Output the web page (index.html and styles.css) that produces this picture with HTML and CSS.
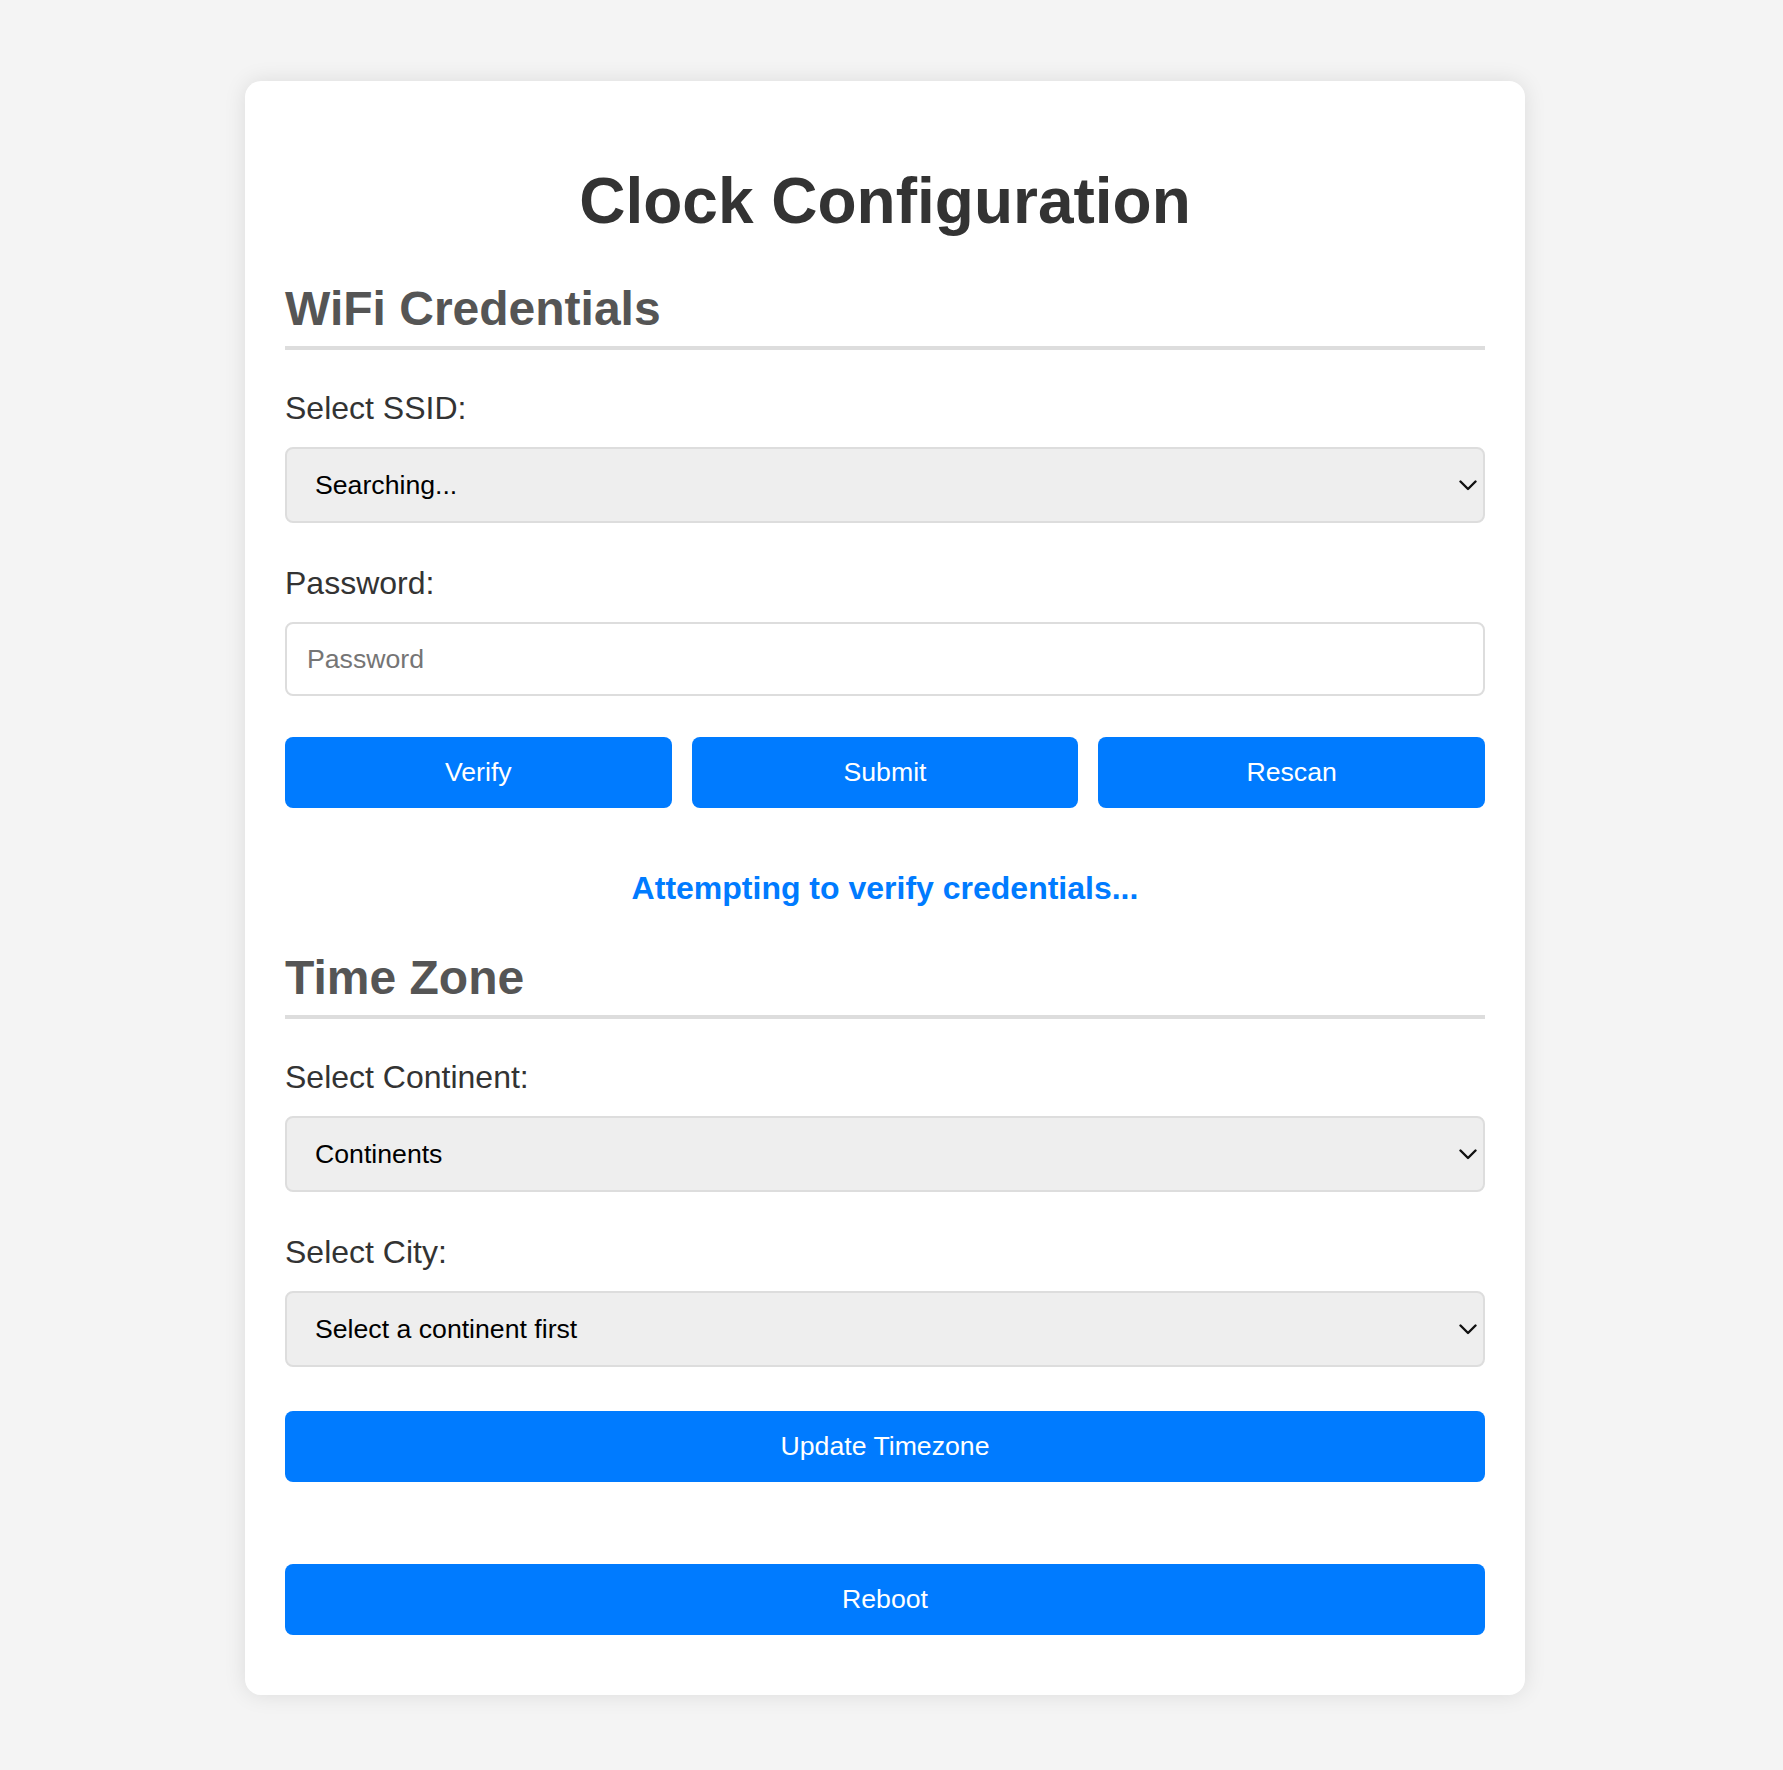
FILE: index.html
```html
<!DOCTYPE html>
<html lang="en">
<head>
<meta charset="utf-8">
<title>Clock Configuration</title>
<link rel="stylesheet" href="styles.css">
</head>
<body>
<main class="card">
  <h1 class="title">Clock Configuration</h1>

  <section class="section">
    <h2 class="section-title">WiFi Credentials</h2>
    <label class="field-label" for="ssid">Select SSID:</label>
    <div class="select-wrap">
      <select id="ssid" class="field-select">
        <option>Searching...</option>
      </select>
      <svg class="chevron" viewBox="0 0 18 11" width="18" height="11" aria-hidden="true"><path d="M1.5 1.5 L9 9 L16.5 1.5" fill="none" stroke="#111" stroke-width="2.4" stroke-linecap="round" stroke-linejoin="round"/></svg>
    </div>
    <label class="field-label" for="pw">Password:</label>
    <input id="pw" class="field-input" type="password" placeholder="Password">
    <div class="button-row">
      <button class="btn">Verify</button>
      <button class="btn">Submit</button>
      <button class="btn">Rescan</button>
    </div>
    <p class="status">Attempting to verify credentials...</p>
  </section>

  <section class="section tz">
    <h2 class="section-title">Time Zone</h2>
    <label class="field-label" for="continent">Select Continent:</label>
    <div class="select-wrap">
      <select id="continent" class="field-select">
        <option>Continents</option>
      </select>
      <svg class="chevron" viewBox="0 0 18 11" width="18" height="11" aria-hidden="true"><path d="M1.5 1.5 L9 9 L16.5 1.5" fill="none" stroke="#111" stroke-width="2.4" stroke-linecap="round" stroke-linejoin="round"/></svg>
    </div>
    <label class="field-label" for="city">Select City:</label>
    <div class="select-wrap select-last">
      <select id="city" class="field-select">
        <option>Select a continent first</option>
      </select>
      <svg class="chevron" viewBox="0 0 18 11" width="18" height="11" aria-hidden="true"><path d="M1.5 1.5 L9 9 L16.5 1.5" fill="none" stroke="#111" stroke-width="2.4" stroke-linecap="round" stroke-linejoin="round"/></svg>
    </div>
    <button class="btn btn-full btn-update">Update Timezone</button>
  </section>

  <button class="btn btn-full btn-reboot">Reboot</button>
</main>
</body>
</html>
```

FILE: styles.css
```css
* {
  box-sizing: border-box;
}

html, body {
  margin: 0;
}

body {
  background: #f4f4f4;
  font-family: "Liberation Sans", Arial, sans-serif;
  color: #333;
  padding: 81px 13px 40px 0;
}

.card {
  display: block;
  width: 1280px;
  margin: 0 auto;
  background: #fff;
  border-radius: 16px;
  padding: 40px;
  box-shadow: 0 0 22px rgba(0, 0, 0, 0.1);
}

.title {
  font-size: 64px;
  font-weight: bold;
  text-align: center;
  color: #333;
  margin: 43px 0 43px;
  line-height: normal;
}

.section-title {
  font-size: 48px;
  font-weight: bold;
  color: #555;
  margin: 0 0 40px;
  padding-bottom: 10px;
  border-bottom: 4px solid #ddd;
  line-height: normal;
}

.field-label {
  display: block;
  font-size: 32px;
  color: #333;
  line-height: normal;
  margin-bottom: 20px;
}

.select-wrap {
  position: relative;
  margin-bottom: 42px;
}

.select-last {
  margin-bottom: 44px;
}

.field-select {
  display: block;
  width: 100%;
  height: 76px;
  -webkit-appearance: none;
  appearance: none;
  background: #eee;
  border: 2px solid #ddd;
  border-radius: 8px;
  padding: 0 50px 0 28px;
  font-family: "Liberation Sans", Arial, sans-serif;
  font-size: 26.67px;
  color: #000;
}

.chevron {
  position: absolute;
  right: 8px;
  top: 33px;
  pointer-events: none;
}

.field-input {
  display: block;
  width: 100%;
  height: 74px;
  background: #fff;
  border: 2px solid #ddd;
  border-radius: 8px;
  padding: 0 20px;
  font-family: "Liberation Sans", Arial, sans-serif;
  font-size: 26.67px;
  color: #000;
  margin-bottom: 41px;
}

.field-input::placeholder {
  color: #757575;
}

.button-row {
  display: grid;
  grid-template-columns: 1fr 1fr 1fr;
  gap: 20px;
}

.btn {
  display: block;
  height: 71px;
  border: none;
  border-radius: 8px;
  background: #007bff;
  color: #fff;
  font-family: "Liberation Sans", Arial, sans-serif;
  font-size: 26.67px;
  padding: 0;
  cursor: pointer;
}

.btn-full {
  width: 100%;
}

.status {
  margin: 62px 0 43px;
  font-size: 32px;
  font-weight: bold;
  color: #007bff;
  text-align: center;
  line-height: normal;
}

.btn-update {
  margin-bottom: 82px;
}

.btn-reboot {
  margin-bottom: 20px;
}
```
